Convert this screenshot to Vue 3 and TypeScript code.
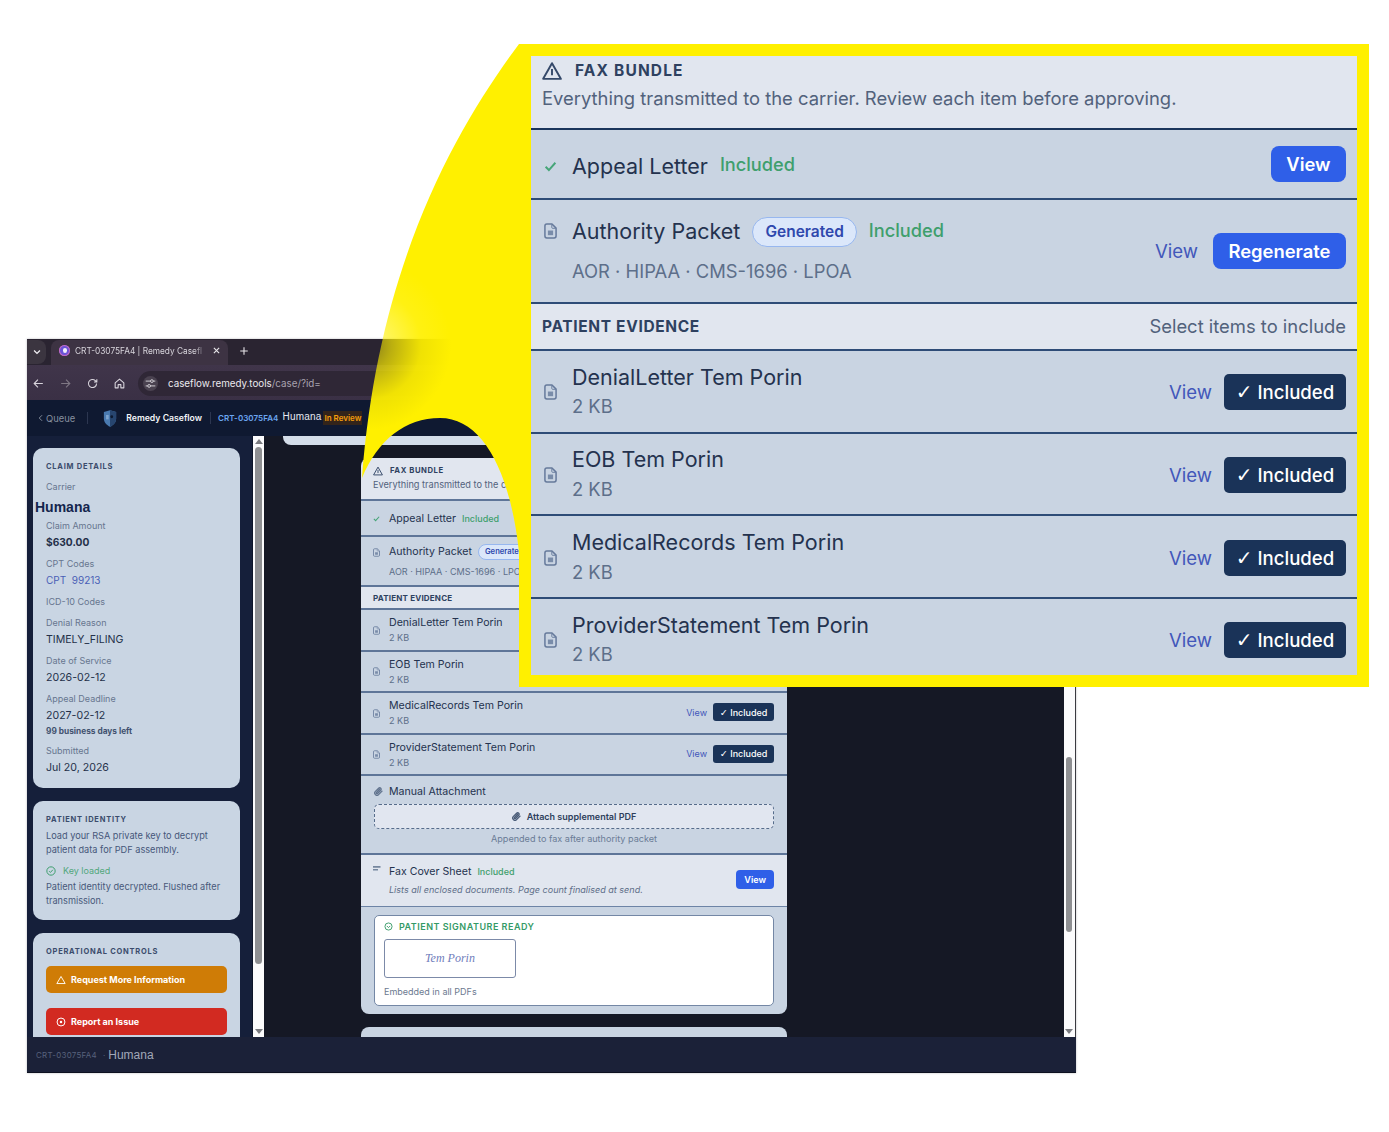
<script setup lang="ts">
interface Field { label: string; value?: string; kind?: string; note?: string }
const fields: Field[] = [
  { label: 'Claim Amount', value: '$630.00', kind: 'money' },
  { label: 'CPT Codes', value: 'CPT  99213', kind: 'code' },
  { label: 'ICD-10 Codes' },
  { label: 'Denial Reason', value: 'TIMELY_FILING' },
  { label: 'Date of Service', value: '2026-02-12' },
  { label: 'Appeal Deadline', value: '2027-02-12', note: '99 business days left' },
  { label: 'Submitted', value: 'Jul 20, 2026' },
]
const docs: string[] = ['DenialLetter', 'EOB', 'MedicalRecords', 'ProviderStatement']
const url = 'caseflow.remedy.tools'
</script>

<template>
  <div class="stage">
    <svg class="defs" width="0" height="0" aria-hidden="true">
      <defs>
        <symbol id="doc" viewBox="0 0 14 17">
          <path d="M3 1h5.6L13 5.4V14a2 2 0 0 1-2 2H3a2 2 0 0 1-2-2V3a2 2 0 0 1 2-2z" fill="none" stroke="currentColor" stroke-width="1.6" stroke-linejoin="round" />
          <path d="M8.400 1.500v3.300a.8.8 0 0 0 .8.8h3.300" fill="none" stroke="currentColor" stroke-width="1" />
          <rect x="4.200" y="8" width="5.600" height="5" fill="currentColor" opacity=".8" />
        </symbol>
        <symbol id="warn" viewBox="0 0 24 24">
          <path d="M12 2.600 22.600 21.400H1.400z" fill="none" stroke="currentColor" stroke-width="2.300" stroke-linejoin="round" />
          <path d="M12 9.500v7.500" fill="none" stroke="currentColor" stroke-width="2.300" />
        </symbol>
        <symbol id="check" viewBox="0 0 24 24">
          <path d="M3 13.500 9 19.500 21 6" fill="none" stroke="currentColor" stroke-width="3.600" />
        </symbol>
        <symbol id="clip" viewBox="0 0 24 24">
          <path d="m21.440 11.050-9.190 9.190a6 6 0 0 1-8.490-8.490l8.570-8.570A4 4 0 1 1 18 8.840l-8.590 8.570a2 2 0 0 1-2.830-2.830l8.490-8.480" fill="none" stroke="currentColor" stroke-width="3.400" stroke-linecap="round" />
        </symbol>
      </defs>
    </svg>

    <section class="window">
      <div class="tabstrip">
        <span class="tabmenu">
          <svg viewBox="0 0 12 12" width="10" height="10"><path d="M2.500 4.200 6 7.700l3.500-3.500" fill="none" stroke="#f0eef2" stroke-width="1.600" /></svg>
        </span>
        <div class="tab">
          <span class="favicon"><i></i></span>
          <span class="tabtitle">CRT-03075FA4 | Remedy Casefl</span>
          <svg viewBox="0 0 12 12" width="9" height="9"><path d="M2.500 2.500l7 7m0-7-7 7" stroke="#e8e6ea" stroke-width="1.500" /></svg>
        </div>
        <svg class="plus" viewBox="0 0 12 12" width="10" height="10"><path d="M6 1.500v9M1.500 6h9" stroke="#e8e6ea" stroke-width="1.300" /></svg>
      </div>

      <div class="toolbar">
        <svg class="nav" viewBox="0 0 24 24"><path d="M20 12H5m6-7-7 7 7 7" fill="none" stroke="#d8d4dc" stroke-width="2" /></svg>
        <svg class="nav" viewBox="0 0 24 24"><path d="M4 12h15m-6-7 7 7-7 7" fill="none" stroke="#7f7784" stroke-width="2" /></svg>
        <svg class="nav" viewBox="0 0 24 24"><path d="M19.500 12a7.500 7.500 0 1 1-2.300-5.400L20 9.200M20 4v5.200h-5.200" fill="none" stroke="#d8d4dc" stroke-width="2" /></svg>
        <svg class="nav" viewBox="0 0 24 24"><path d="M4 11l8-7 8 7v9h-5.500v-6h-5v6H4z" fill="none" stroke="#d8d4dc" stroke-width="2" stroke-linejoin="round" /></svg>
        <div class="omnibox">
          <span class="tune">
            <svg viewBox="0 0 16 16" width="11" height="11"><path d="M1 4.500h7M12 4.500h3M1 11.500h3M8 11.500h7" stroke="#e0dde3" stroke-width="1.300" /><circle cx="10" cy="4.500" r="2" fill="none" stroke="#e0dde3" stroke-width="1.300" /><circle cx="6" cy="11.500" r="2" fill="none" stroke="#e0dde3" stroke-width="1.300" /></svg>
          </span>
          <span class="url">{{ url }}<em>/case/?id=</em></span>
        </div>
      </div>

      <header class="appbar">
        <span class="back"><svg viewBox="0 0 8 12" width="5" height="8"><path d="M6.500 1.500 2 6l4.500 4.500" fill="none" stroke="#87909f" stroke-width="1.500" /></svg>Queue</span>
        <span class="sep"></span>
        <svg class="shield" viewBox="0 0 16 20" width="14" height="19">
          <path d="M8 .5 15 2.500V10c0 4.500-3.200 7.600-7 9.500C4.200 17.600 1 14.500 1 10V2.500z" fill="#4a7ab0" />
          <path d="M8 .5 15 2.500V10c0 4.500-3.200 7.600-7 9.500z" fill="#27456f" />
          <circle cx="10" cy="8" r="1.600" fill="#0e1a30" />
          <path d="M3.500 6h3v5h-3z" fill="#7fa5cf" />
        </svg>
        <span class="brand">Remedy Caseflow</span>
        <span class="sep sep2"></span>
        <span class="caseid">CRT-03075FA4</span>
        <span class="carrier">Humana</span>
        <span class="status">In Review</span>
      </header>

      <div class="body">
        <aside class="sidebar">
          <div class="card details">
            <h3 class="cardtitle">CLAIM DETAILS</h3>
            <div class="field carrierfield">
              <div class="flabel">Carrier</div>
              <div class="carriername">Humana</div>
            </div>
            <div v-for="f in fields" :key="f.label" class="field">
              <div class="flabel">{{ f.label }}</div>
              <div v-if="f.value" class="fvalue" :class="f.kind">{{ f.value }}</div>
              <div v-if="f.note" class="fnote">{{ f.note }}</div>
            </div>
          </div>
          <div class="card identity">
            <h3 class="cardtitle">PATIENT IDENTITY</h3>
            <p class="idtext">Load your RSA private key to decrypt patient data for PDF assembly.</p>
            <div class="keyloaded">
              <svg viewBox="0 0 24 24" width="10" height="10"><circle cx="12" cy="12" r="10" fill="none" stroke="#3f9e6e" stroke-width="2.400" /><path d="M7.500 12.500l3 3 6-6.500" fill="none" stroke="#3f9e6e" stroke-width="2.400" /></svg>
              <span>Key loaded</span>
            </div>
            <p class="idtext strong">Patient identity decrypted. Flushed after transmission.</p>
          </div>
          <div class="card controls">
            <h3 class="cardtitle">OPERATIONAL CONTROLS</h3>
            <button class="opbtn orange">
              <svg viewBox="0 0 24 24" width="10" height="10"><path d="M12 3.500 22 20.500H2z" fill="none" stroke="#fff" stroke-width="2.200" stroke-linejoin="round" /></svg>
              Request More Information
            </button>
            <button class="opbtn red">
              <svg viewBox="0 0 24 24" width="10" height="10"><circle cx="12" cy="12" r="9.500" fill="none" stroke="#fff" stroke-width="2.400" /><circle cx="12" cy="12" r="3" fill="#fff" /></svg>
              Report an Issue
            </button>
          </div>
        </aside>

        <div class="scrollbar sb-left">
          <i class="arrow up"></i>
          <div class="track"><b class="thumb thumb-left"></b></div>
          <i class="arrow down"></i>
        </div>

        <main class="content">
          <div class="prior"></div>
          <div class="fax small">
            <div class="head">
              <div class="headtitle"><svg class="warnicon"><use href="#warn" /></svg>FAX BUNDLE</div>
              <div class="headdesc">Everything transmitted to the carrier. Review each item before approving.</div>
            </div>
            <div class="row appeal">
              <svg class="ico okay"><use href="#check" /></svg>
              <div class="main"><div class="tline"><span class="title">Appeal Letter</span><span class="inc">Included</span></div></div>
              <div class="actions"><button class="primary">View</button></div>
            </div>
            <div class="row authority">
              <svg class="ico high"><use href="#doc" /></svg>
              <div class="main">
                <div class="tline"><span class="title">Authority Packet</span><span class="pill">Generated</span><span class="inc">Included</span></div>
                <div class="sub far">AOR · HIPAA · CMS-1696 · LPOA</div>
              </div>
              <div class="actions"><a class="view">View</a><button class="primary">Regenerate</button></div>
            </div>
            <div class="row evidence"><span class="evlabel">PATIENT EVIDENCE</span><span class="evhint">Select items to include</span></div>
            <div v-for="d in docs" :key="d" class="row doc">
              <svg class="ico"><use href="#doc" /></svg>
              <div class="main"><div class="title">{{ d }} Tem Porin</div><div class="sub">2 KB</div></div>
              <div class="actions"><a class="view">View</a><button class="incl"><span class="tick">✓</span> Included</button></div>
            </div>
            <div class="manual">
              <div class="manualtitle"><svg class="clip"><use href="#clip" /></svg>Manual Attachment</div>
              <div class="attach"><svg class="clip"><use href="#clip" /></svg>Attach supplemental PDF</div>
              <div class="appended">Appended to fax after authority packet</div>
            </div>
            <div class="cover">
              <svg class="covericon" viewBox="0 0 8 6" width="8" height="6"><path d="M0 0h7.500v1.800H0zM0 3h5v1.600H0z" fill="#76879f" /></svg>
              <div class="main">
                <div class="tline"><span class="title">Fax Cover Sheet</span><span class="inc">Included</span></div>
                <div class="coverdesc">Lists all enclosed documents. Page count finalised at send.</div>
              </div>
              <button class="primary">View</button>
            </div>
            <div class="sigarea">
              <div class="sigbox">
                <div class="sigtitle">
                  <svg viewBox="0 0 24 24" width="9" height="9"><circle cx="12" cy="12" r="9.500" fill="none" stroke="#3f9e6e" stroke-width="2.600" /><path d="M7.500 10.500l4.500 4.500 4.500-4.500" fill="none" stroke="#3f9e6e" stroke-width="2.600" /></svg>
                  PATIENT SIGNATURE READY
                </div>
                <div class="sigframe"><span class="script">Tem Porin</span></div>
                <div class="embedded">Embedded in all PDFs</div>
              </div>
            </div>
          </div>
          <div class="nextpanel"></div>
        </main>

        <div class="scrollbar sb-right">
          <div class="track"><b class="thumb thumb-right"></b></div>
          <i class="arrow down"></i>
        </div>
      </div>

      <footer class="winfoot">
        <span class="footid">CRT-03075FA4</span>
        <span class="footdot">·</span>
        <span class="footname">Humana</span>
      </footer>
    </section>

    <svg class="wedge" viewBox="0 0 1389 1132" width="1389" height="1132" aria-hidden="true">
      <defs>
        <radialGradient id="wedgefill" gradientUnits="userSpaceOnUse" cx="366" cy="345" r="85">
          <stop offset="0" stop-color="#fff000" stop-opacity=".4" />
          <stop offset=".3" stop-color="#fff000" stop-opacity=".68" />
          <stop offset=".65" stop-color="#fff000" stop-opacity=".93" />
          <stop offset="1" stop-color="#fff000" stop-opacity="1" />
        </radialGradient>
      </defs>
      <path d="M519 44C455 130 378 265 362 478C378 440 405 418 440 418C482 418 510 470 519 552L531 552V44Z" fill="url(#wedgefill)" />
    </svg>

    <section class="callout">
      <div class="fax big">
        <div class="head">
          <div class="headtitle"><svg class="warnicon"><use href="#warn" /></svg>FAX BUNDLE</div>
          <div class="headdesc">Everything transmitted to the carrier. Review each item before approving.</div>
        </div>
        <div class="row appeal">
          <svg class="ico okay"><use href="#check" /></svg>
          <div class="main"><div class="tline"><span class="title">Appeal Letter</span><span class="inc">Included</span></div></div>
          <div class="actions"><button class="primary">View</button></div>
        </div>
        <div class="row authority">
          <svg class="ico high"><use href="#doc" /></svg>
          <div class="main">
            <div class="tline"><span class="title">Authority Packet</span><span class="pill">Generated</span><span class="inc">Included</span></div>
            <div class="sub far">AOR · HIPAA · CMS-1696 · LPOA</div>
          </div>
          <div class="actions"><a class="view">View</a><button class="primary">Regenerate</button></div>
        </div>
        <div class="row evidence"><span class="evlabel">PATIENT EVIDENCE</span><span class="evhint">Select items to include</span></div>
        <div v-for="d in docs" :key="d" class="row doc">
          <svg class="ico"><use href="#doc" /></svg>
          <div class="main"><div class="title">{{ d }} Tem Porin</div><div class="sub">2 KB</div></div>
          <div class="actions"><a class="view">View</a><button class="incl"><span class="tick">✓</span> Included</button></div>
        </div>
      </div>
    </section>
  </div>
</template>

<style scoped>
.stage { position: relative; width: 1389px; height: 1132px; overflow: hidden; background: #fff; font-family: Inter, "Liberation Sans", sans-serif; color: #1d2a42; }
.defs { position: absolute; }

.window { position: absolute; left: 27px; top: 339px; width: 1049px; height: 734px; display: flex; flex-direction: column; overflow: hidden; box-shadow: 0 0 2px rgba(60,60,70,.35); }

.tabstrip { height: 26px; flex: none; display: flex; align-items: flex-end; background: #2a2431; }
.tabmenu { width: 19px; height: 24px; margin-bottom: 1px; display: flex; align-items: center; justify-content: center; background: #3b3540; border-radius: 0 8px 8px 0; }
.tab { width: 177px; height: 25px; margin-left: 5px; padding: 0 7px 4px 8px; box-sizing: border-box; display: flex; align-items: center; gap: 5px; background: #3d3343; border-radius: 8px 8px 0 0; font-size: 8.3px; color: #d8d5dc; white-space: nowrap; }
.favicon { width: 11px; height: 11px; flex: none; border-radius: 50%; background: #6a53d8; box-shadow: inset 0 0 0 1px #c66ac0; display: flex; align-items: center; justify-content: center; }
.favicon i { width: 4px; height: 5px; background: #f2f0fa; border-radius: 2px 2px 50% 50%; }
.tabtitle { flex: 1; min-width: 0; -webkit-mask-image: linear-gradient(90deg, #000 90%, transparent); mask-image: linear-gradient(90deg, #000 90%, transparent); }
.plus { margin: 0 0 9px 11px; }

.toolbar { height: 35px; flex: none; box-sizing: border-box; display: flex; align-items: center; padding: 1px 0 0 5px; background: linear-gradient(#40354a, #3a3045); }
.nav { width: 13px; height: 13px; margin-right: 14px; flex: none; }
.omnibox { width: 900px; height: 25px; margin-left: -2px; display: flex; align-items: center; gap: 10px; padding-left: 5px; background: #2f2736; border-radius: 13px; }
.tune { width: 15px; height: 15px; display: flex; align-items: center; justify-content: center; border-radius: 50%; background: #4a4250; }
.url { font-size: 9.8px; color: #ece9ef; }
.url em { font-style: normal; color: #a8a2ae; }

.appbar { height: 36px; flex: none; display: flex; align-items: center; padding-left: 11px; background: #0f1931; white-space: nowrap; }
.back { display: flex; align-items: center; gap: 3px; font-size: 9.4px; color: #87909f; }
.sep { width: 1px; height: 12px; background: #2c3650; margin: 0 15px 0 12px; }
.sep2 { margin: 0 7px 0 8px; }
.brand { margin-left: 9px; font-size: 8.7px; font-weight: 600; color: #f3f4f8; }
.caseid { font-size: 8px; font-weight: 600; letter-spacing: .05px; color: #6ba6f2; }
.carrier { margin: 0 2px 3px 4px; font-family: "Liberation Sans", sans-serif; font-size: 10px; letter-spacing: .2px; color: #e6e8f0; }
.status { padding: 2px 1px; font-size: 8px; font-weight: 600; color: #f59e0b; background: #33241a; white-space: nowrap; }

.body { flex: 1; min-height: 0; display: flex; }
.sidebar { width: 225px; flex: none; box-sizing: border-box; padding: 12px 12px 0 6px; display: flex; flex-direction: column; gap: 13px; background: #151f3a; overflow: hidden; }
.card { flex: none; box-sizing: border-box; padding: 12px 13px; background: #c9d5e3; border-radius: 10px; }
.details { height: 340px; padding-top: 13px; }
.cardtitle { margin: 0; font-size: 7.5px; line-height: 12px; font-weight: 700; letter-spacing: .75px; color: #3b4c6c; }
.field { margin-top: 5px; }
.carrierfield { margin-top: 6px; }
.flabel { font-size: 9px; line-height: 16px; color: #67768f; }
.carriername { margin: 4px 0 -2px -11px; font-family: "Liberation Sans", sans-serif; font-size: 14px; line-height: 16px; font-weight: 700; color: #14254d; }
.fvalue { font-size: 10.6px; line-height: 17px; color: #243049; }
.fvalue.money { font-weight: 700; font-size: 10.2px; }
.fvalue.code { color: #4a60b6; font-size: 10px; white-space: pre; }
.fnote { margin-top: 1px; font-size: 8.3px; line-height: 13px; font-weight: 700; color: #42526f; }
.identity { height: 119px; padding-top: 13px; }
.idtext { margin: 3px 0 0; font-size: 9.2px; line-height: 14px; color: #46577a; }
.idtext.strong { margin: 2px 0 0; color: #48597a; }
.keyloaded { margin-top: 7px; display: flex; align-items: center; gap: 7px; font-size: 9px; line-height: 14px; color: #52a77c; }
.controls { padding-top: 13px; height: 140px; }
.opbtn { width: 181px; height: 27px; margin-top: 15px; display: flex; align-items: center; gap: 5px; padding: 0 0 0 10px; border: 0; border-radius: 5px; font: 700 9px Inter, sans-serif; color: #fff; }
.controls .cardtitle + .opbtn { margin-top: 8px; }
.orange { background: #cf7c06; }
.red { background: #d22a21; }

.scrollbar { width: 11px; flex: none; box-sizing: border-box; padding: 0 2px; background: #fbfbfc; display: flex; flex-direction: column; align-items: center; }
.sb-left { border-left: 1px solid #0c1428; width: 12px; }
.sb-right { width: 12px; padding: 0 3px 0 2px; border-right: 1px solid #3a3a40; }
.track { flex: 1; min-height: 0; width: 100%; display: flex; flex-direction: column; }
.thumb { display: block; background: #8e8f92; border-radius: 4px; }
.thumb-left { height: 517px; }
.thumb-right { height: 175px; margin-top: 321px; }
.arrow { flex: none; width: 0; height: 0; border-left: 4px solid transparent; border-right: 4px solid transparent; margin: 3px 0; }
.arrow.up { border-bottom: 5px solid #7a7b80; }
.arrow.down { border-top: 5px solid #7a7b80; }

.content { flex: 1; min-width: 0; background: #151825; overflow: hidden; }
.prior { width: 504px; height: 9px; margin-left: 19px; background: #d4dde9; border-radius: 0 0 8px 8px; }
.nextpanel { width: 426px; height: 40px; margin: 13px 0 0 97px; background: #c9d4e2; border-radius: 8px 8px 0 0; }

.fax { color: #1f2d49; }
.fax.small { width: 426px; margin: 13px 0 0 97px; font-size: 10.6px; border-radius: 8px; overflow: hidden;
  --pl: 12px; --pr: 13px; --icow: 16px; --icoh: 9px; --icow2: 7px; --line: #5e7598; --lw: 2px; --gap: 6px; --far: 5px; }
.fax.big { width: 826px; font-size: 21.5px;
  --pl: 13px; --pr: 11px; --icow: 28px; --icoh: 16px; --icow2: 13px; --line: #2e4c77; --lw: 2px; --gap: 12px; --far: 11px; }

.head { box-sizing: border-box; background: #e1e6ef; border-bottom: var(--lw) solid var(--line); }
.small .head { height: 43px; padding: 6px 12px 0; }
.big .head { height: 74px; padding: 1px 11px 0; border-bottom-color: #1b355c; }
.headtitle { display: flex; align-items: center; font-weight: 700; color: #2e4160; }
.small .headtitle { font-size: 7.7px; line-height: 14px; letter-spacing: .55px; gap: 7px; }
.big .headtitle { font-size: 15.5px; line-height: 28px; letter-spacing: 1.15px; gap: 13px; }
.warnicon { color: #35496a; flex: none; }
.small .warnicon { width: 10px; height: 10px; }
.big .warnicon { width: 20px; height: 20px; }
.headdesc { color: #52627c; }
.small .headdesc { font-size: 9.2px; line-height: 15px; margin-top: -1px; }
.big .headdesc { font-size: 18.4px; line-height: 29px; margin-top: -1px; }

.row { display: flex; align-items: center; box-sizing: border-box; padding: 0 var(--pr) 0 var(--pl); background: #c9d4e2; border-bottom: var(--lw) solid var(--line); }
.small .appeal { height: 36px; padding-top: 1px; }
.small .authority { height: 50px; }
.small .evidence { height: 23px; }
.small .doc { height: 41.5px; padding-top: 1px; }
.small .doc .sub { margin-top: 1px; }
.small .doc .actions { margin-bottom: 2px; }
.big .appeal { height: 70px; padding-top: 4px; }
.big .appeal .actions { margin-bottom: 4px; }
.big .authority { height: 104px; }
.big .authority .title { margin-top: -1px; }
.big .evidence { height: 47px; }
.big .doc { height: 82.67px; }
.big .doc .actions { margin-top: 2px; }
.big .doc .ico { margin-top: 2px; }
.big .doc .sub { margin-top: 2px; }
.ico { flex: none; width: var(--icow2); height: var(--icoh); margin-right: calc(var(--icow) - var(--icow2)); color: #65799b; }
.ico.okay { color: #46a578; }
.ico.high { align-self: flex-start; }
.small .ico.high { margin-top: 11px; }
.big .ico.high { margin-top: 23px; }
.main { flex: 1; min-width: 0; }
.tline { display: flex; align-items: center; white-space: nowrap; gap: var(--gap); }
.title { color: #24324e; line-height: 1.32; }
.big .inc { font-size: 18.2px; margin-bottom: 4px; }
.small .inc { font-size: 9px; margin-bottom: 1px; }
.inc { color: #3f9f6d; font-weight: 500; }
.pill { box-sizing: border-box; border: 1.5px solid #97b7ef; background: #dbe7fa; color: #2f48ad; font-size: .72em; font-weight: 600; border-radius: 99px; padding: .32em .78em; line-height: 1.2; }
.small .pill { border-width: 1px; }
.sub { color: #5d6f8a; font-size: .855em; line-height: 1.45; }
.sub.far { margin-top: var(--far); }
.actions { flex: none; display: flex; align-items: center; gap: var(--gap); }
.view { color: #4257ba; }
.big .view { font-size: 18.6px; }
.big .authority .view { margin-right: 3px; }
.small .view { font-size: 9px; }
button { font-family: Inter, sans-serif; cursor: default; }
.primary { border: 0; background: #2f5fe8; color: #fff; font-weight: 600; }
.big .primary { height: 36px; padding: 0 15.5px; font-size: 18.4px; border-radius: 8px; }
.small .primary { height: 19px; padding: 0 8px; font-size: 9px; border-radius: 4px; }
.incl { border: 0; background: #1a3358; color: #fff; font-weight: 500; }
.tick { font-family: "DejaVu Sans", sans-serif; font-size: 1.08em; }
.big .incl { width: 122px; height: 36px; font-size: 18.6px; border-radius: 5px; padding: 0; }
.small .incl { width: 61px; height: 18px; font-size: 9px; border-radius: 3px; padding: 0; }
.evidence { justify-content: space-between; background: #e1e6ef; }
.big .evidence { padding-left: 11px; }
.evlabel { font-weight: 700; color: #2e4160; }
.small .evlabel { font-size: 8px; letter-spacing: .2px; }
.big .evlabel { font-size: 15.5px; letter-spacing: .65px; }
.evhint { color: #52627c; }
.big .evhint { font-size: 18.4px; margin-bottom: 2px; }
.small .evhint { font-size: 9.2px; }

.manual { height: 79px; box-sizing: border-box; padding: 8px 13px 0 13px; background: #c9d4e2; border-bottom: 2px solid #5e7598; }
.manualtitle { display: flex; align-items: center; gap: 6px; line-height: 15px; color: #24324e; }
.clip { width: 9px; height: 9px; color: #62748f; flex: none; }
.attach { height: 25px; margin-top: 5px; box-sizing: border-box; display: flex; align-items: center; justify-content: center; gap: 6px; background: #e1e6f0; border: 1px dashed #566c8b; border-radius: 5px; font-size: 9px; font-weight: 600; color: #2e3f5c; }
.attach .clip { color: #4a5c78; }
.appended { margin-top: 4px; text-align: center; font-size: 9.1px; line-height: 12px; color: #6b7c96; }
.cover { height: 52px; box-sizing: border-box; display: flex; align-items: center; padding: 0 13px 0 12px; background: #e1e6ef; border-bottom: 1px solid #6d84a6; }
.cover .primary { margin-bottom: 2px; }
.covericon { flex: none; align-self: flex-start; margin: 11px 8px 0 0; }
.coverdesc { margin-top: 5px; font-size: 9.05px; line-height: 12px; font-style: italic; color: #5d6e88; }
.sigarea { height: 107px; box-sizing: border-box; padding: 8px 13px 0 13px; background: #c9d4e2; }
.sigbox { height: 91px; box-sizing: border-box; padding: 4px 9px; background: #fff; border: 1px solid #7487a5; border-radius: 5px; }
.sigtitle { display: flex; align-items: center; gap: 6px; font-size: 9px; line-height: 13px; font-weight: 600; letter-spacing: .5px; color: #349a66; }
.sigframe { width: 132px; height: 39px; margin-top: 6px; box-sizing: border-box; display: flex; align-items: center; justify-content: center; border: 1px solid #7c8aa8; border-radius: 3px; }
.script { font-family: "Liberation Serif", serif; font-style: italic; font-size: 12px; color: #6f7dbb; }
.embedded { margin-top: 8px; font-size: 9px; line-height: 12px; color: #6c7a90; }

.winfoot { height: 36px; flex: none; box-sizing: border-box; display: flex; align-items: center; padding-left: 9px; background: #1b2138; border-bottom: 1px solid #0d1120; }
.footid { font-size: 7.9px; letter-spacing: .3px; color: #58627c; }
.footdot { margin: 0 3px 0 6px; font-size: 8px; color: #58627c; }
.footname { font-family: "Liberation Sans", sans-serif; font-size: 12px; color: #a2a8b8; }

.wedge { position: absolute; left: 0; top: 0; pointer-events: none; }
.callout { position: absolute; left: 519px; top: 44px; width: 850px; height: 643px; box-sizing: border-box; border: 12px solid #fff000; background: #c9d4e2; overflow: hidden; }
</style>

<style>
html, body { margin: 0; background: #fff; }
</style>
